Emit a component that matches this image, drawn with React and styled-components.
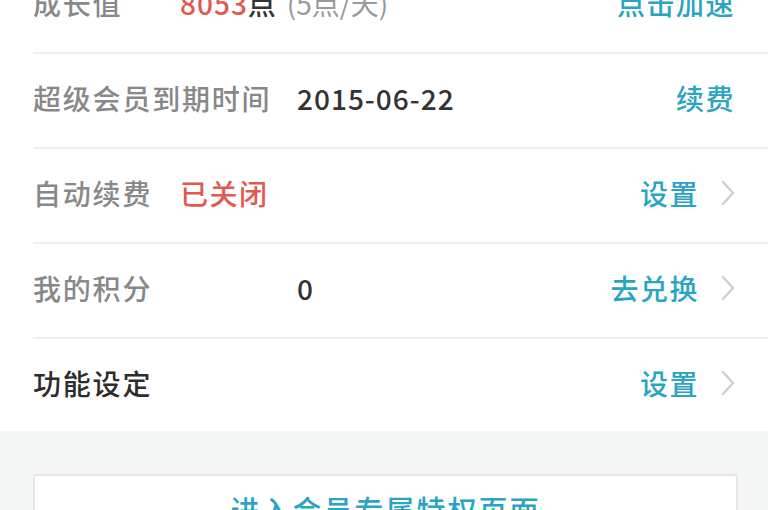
import React from 'react'
import styled, { createGlobalStyle } from 'styled-components'

const GlobalStyle = createGlobalStyle`
  html, body {
    margin: 0;
    padding: 0;
    background: #f4f5f5;
    overflow: hidden;
  }
  body {
    font-family: "Noto Sans CJK SC", "Noto Sans", "Liberation Sans", sans-serif;
  }
`

const Page = styled.div`
  margin-top: -41px;
  width: 768px;
`

const List = styled.div`
  background: #ffffff;
  padding-left: 33px;
`

const Row = styled.div`
  display: flex;
  align-items: center;
  height: ${p => (p.$last ? '92px' : '95px')};
  padding-right: 33px;
  padding-bottom: 5px;
  border-bottom: ${p => (p.$last ? 'none' : '2px solid #eeeeee')};
  box-sizing: border-box;
  font-size: 28px;
`

const Label = styled.div`
  width: ${p => (p.$width ? `${p.$width}px` : 'auto')};
  flex-shrink: 0;
  color: ${p => (p.$strong ? '#2c2c2c' : '#888888')};
  font-weight: 500;
  letter-spacing: 1.8px;
`

const Value = styled.div`
  flex: 1;
  white-space: nowrap;
  font-weight: 500;
`

const Red = styled.span`
  color: #e05a50;
  letter-spacing: ${p => (p.$wide ? '1.5px' : '1px')};
`

const Dark = styled.span`
  color: #333333;
  letter-spacing: 1px;
`

const Muted = styled.span`
  color: #9a9a9a;
  margin-left: 10px;
  font-weight: 400;
`

const Action = styled.div`
  display: flex;
  align-items: center;
  gap: 22px;
`

const ActionText = styled.span`
  color: #2ba4c2;
  letter-spacing: 1.5px;
  font-weight: 500;
`

const Footer = styled.div`
  padding: 43px 30px 0 33px;
`

const EnterButton = styled.div`
  background: #ffffff;
  border: 2px solid #e6e6e6;
  border-radius: 4px;
  height: 80px;
  display: flex;
  justify-content: center;
  padding-top: 12px;
  box-sizing: border-box;
  color: #2ba4c2;
  font-size: 29px;
  font-weight: 500;
  letter-spacing: 2px;
`

const Chevron = () => (
  <svg width="14" height="26" viewBox="0 0 14 26">
    <path d="M2 2 L12 13 L2 24" fill="none" stroke="#cfcfcf" strokeWidth="2.4" strokeLinecap="round" strokeLinejoin="round" />
  </svg>
)

const App = () => {
  const rows = [
    { label: '成长值', labelWidth: 147, value: <><Red>8053</Red><Dark>点</Dark><Muted>(5点/天)</Muted></>, action: '点击加速' },
    { label: '超级会员到期时间', labelWidth: 264, value: <Dark>2015-06-22</Dark>, action: '续费' },
    { label: '自动续费', labelWidth: 147, value: <Red $wide>已关闭</Red>, action: '设置', arrow: true },
    { label: '我的积分', labelWidth: 264, value: <Dark>0</Dark>, action: '去兑换', arrow: true },
    { label: '功能设定', strong: true, action: '设置', arrow: true, last: true },
  ]

  return (
    <>
      <GlobalStyle />
      <Page>
        <List>
          {rows.map((r, i) => (
            <Row key={i} $last={r.last}>
              <Label $width={r.labelWidth} $strong={r.strong}>{r.label}</Label>
              <Value>{r.value}</Value>
              <Action>
                <ActionText>{r.action}</ActionText>
                {r.arrow && <Chevron />}
              </Action>
            </Row>
          ))}
        </List>
        <Footer>
          <EnterButton>进入会员专属特权页面</EnterButton>
        </Footer>
      </Page>
    </>
  )
}

export default App
